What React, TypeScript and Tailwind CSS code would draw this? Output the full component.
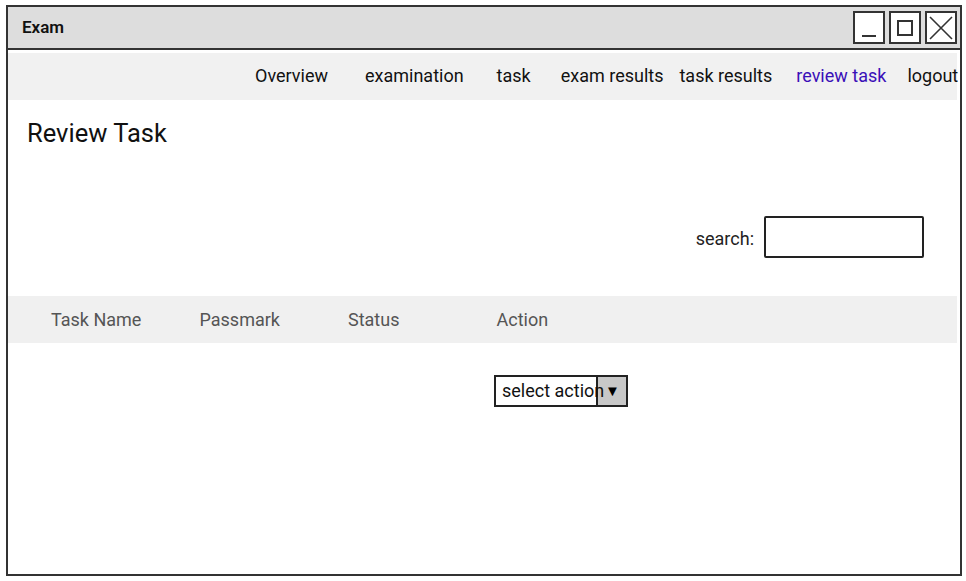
import React from 'react';

const navItems = [
    {label: 'Overview', ml: 'ml-[247px]'},
    {label: 'examination', ml: 'ml-[37px]'},
    {label: 'task', ml: 'ml-[33px]'},
    {label: 'exam results', ml: 'ml-[30px]'},
    {label: 'task results', ml: 'ml-[16px]'},
    {label: 'review task', ml: 'ml-[24px]', active: true},
    {label: 'logout', ml: 'ml-[21px]'},
];

const columns = ['Task Name', 'Passmark', 'Status', 'Action'];

function WinButton({children}: { children: React.ReactNode }) {
    return (
        <div className="w-[32px] h-[33px] border-2 border-[#333] bg-white flex items-center justify-center">
            {children}
        </div>
    );
}

export default function App() {
    return (
        <div className="w-[966px] h-[581px] bg-white pt-[5px] pl-[6px]" style={{fontFamily: 'Roboto, "Liberation Sans", sans-serif'}}>
            <div className="w-[956px] h-[571px] border-2 border-[#333] flex flex-col">
                {/* title bar */}
                <div className="h-[43px] shrink-0 bg-[#dddddd] border-b-2 border-[#333] flex items-center justify-between pl-[14px] pr-[3px]">
                    <span className="text-[17px] font-semibold text-[#111]">Exam</span>
                    <div className="flex gap-[4px]">
                        <WinButton>
                            <div className="w-[14px] h-[2px] bg-[#333] mt-[16px]"/>
                        </WinButton>
                        <WinButton>
                            <div className="w-[16px] h-[16px] border-2 border-[#333]"/>
                        </WinButton>
                        <WinButton>
                            <svg width="24" height="24" viewBox="0 0 24 24" stroke="#333" strokeWidth="1.6" fill="none">
                                <path d="M1 1 L23 23 M23 1 L1 23"/>
                            </svg>
                        </WinButton>
                    </div>
                </div>

                {/* nav */}
                <div className="mt-[3px] mr-[3px] h-[47px] shrink-0 bg-[#f1f1f1] flex items-center pb-[2px] text-[18px] text-[#111]">
                    {navItems.map(item => (
                        <span key={item.label}
                              className={`${item.ml} whitespace-nowrap ${item.active ? 'text-[#3a0fb8]' : ''}`}>
                            {item.label}
                        </span>
                    ))}
                </div>

                <div className="pl-[19px] pt-[17px]">
                    <h1 className="text-[25.5px] text-[#111] leading-[32px]">Review Task</h1>
                </div>

                {/* search */}
                <div className="mt-[67px] flex items-center justify-end pr-[36px]">
                    <span className="text-[18px] text-[#222] mr-[10px] mt-[2px]">search:</span>
                    <div className="w-[160px] h-[42px] border-2 border-[#222] rounded-[2px]"/>
                </div>

                {/* table header */}
                <div className="mt-[38px] mr-[3px] h-[47px] bg-[#f0f0f0] flex items-center pl-[43px] text-[18px] text-[#555]">
                    {columns.map(c => (
                        <div key={c} className="w-[148.5px]">{c}</div>
                    ))}
                </div>

                {/* row */}
                <div className="mt-[32px] pl-[486px]">
                    <div className="w-[134px] h-[32px] border-2 border-[#222] flex relative overflow-hidden">
                        <div className="flex-1 bg-white"/>
                        <div className="w-[30px] bg-[#c8c8c8] border-l-2 border-[#222] flex items-center pl-[7px] text-[15px] text-black">▼</div>
                        <span className="absolute left-[6px] top-[2px] text-[18px] leading-[24px] text-[#111] whitespace-nowrap">select action</span>
                    </div>
                </div>
            </div>
        </div>
    );
}
